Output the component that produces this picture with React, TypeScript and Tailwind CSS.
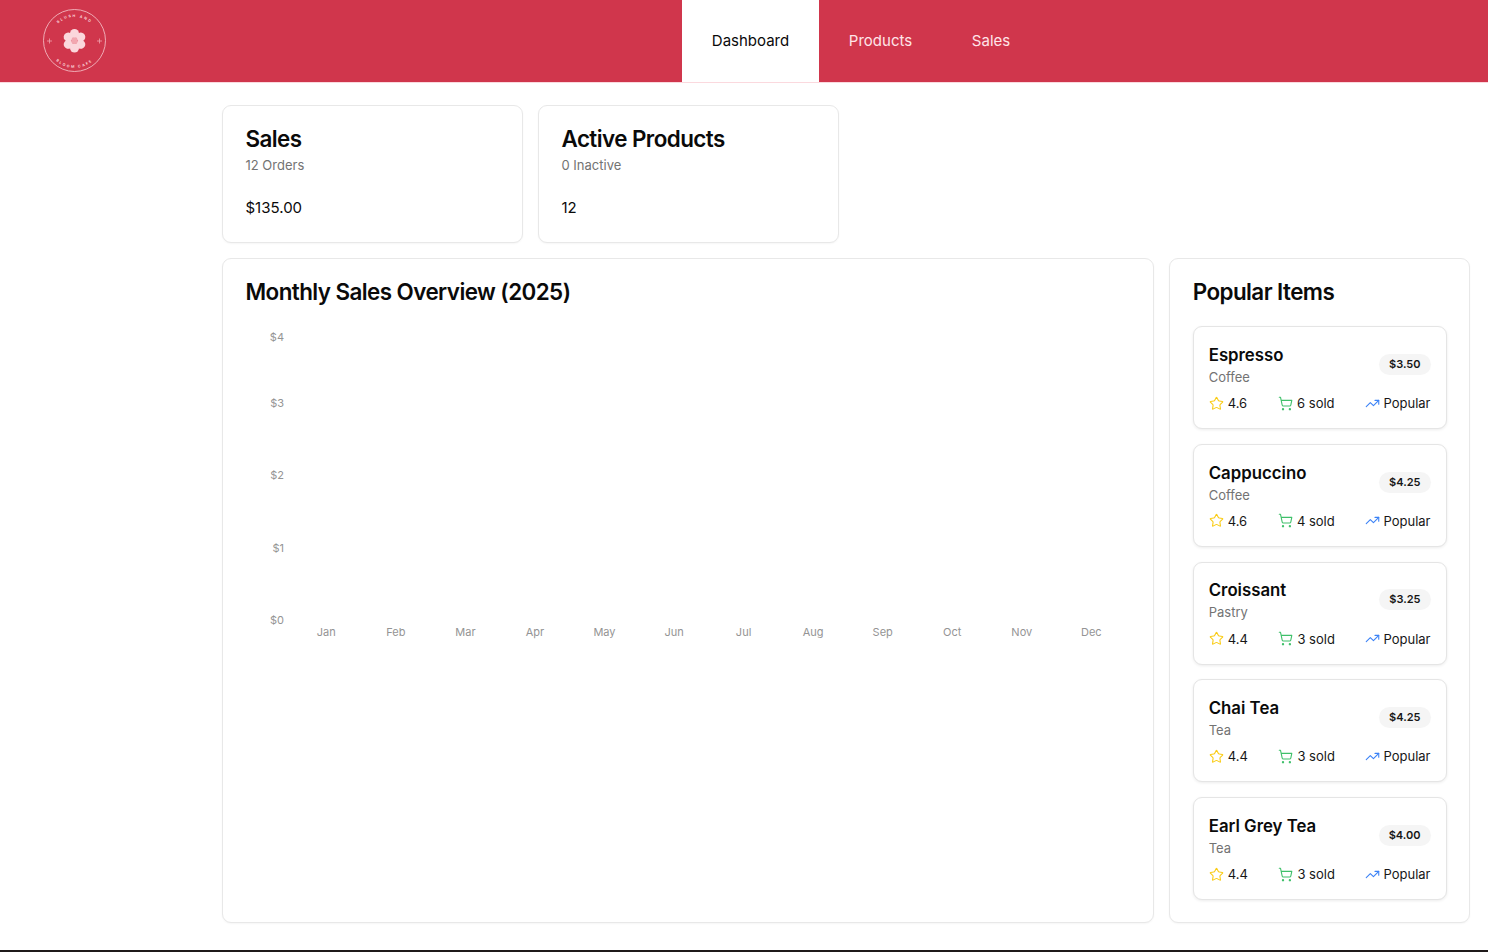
import React from "react";
import { ShoppingCart, Star, TrendingUp } from "lucide-react";

const items = [
  { name: "Espresso", cat: "Coffee", price: "$3.50", rating: "4.6", sold: "6 sold" },
  { name: "Cappuccino", cat: "Coffee", price: "$4.25", rating: "4.6", sold: "4 sold" },
  { name: "Croissant", cat: "Pastry", price: "$3.25", rating: "4.4", sold: "3 sold" },
  { name: "Chai Tea", cat: "Tea", price: "$4.25", rating: "4.4", sold: "3 sold" },
  { name: "Earl Grey Tea", cat: "Tea", price: "$4.00", rating: "4.4", sold: "3 sold" },
];
const months = ["Jan", "Feb", "Mar", "Apr", "May", "Jun", "Jul", "Aug", "Sep", "Oct", "Nov", "Dec"];
const ticks: [string, number][] = [["$4", 341], ["$3", 407], ["$2", 479], ["$1", 552], ["$0", 624]];

function Logo() {
  const petals = [0, 60, 120, 180, 240, 300];
  return (
    <svg width="64" height="64" viewBox="0 0 64 64" className="shrink-0">
      <defs>
        <path id="top-arc" d="M 7.5 32 A 24 24 0 0 1 55.5 32" />
        <path id="bottom-arc" d="M 4.5 32 A 27 27 0 0 0 58.5 32" />
      </defs>
      <circle cx="31.5" cy="31.5" r="31" fill="none" stroke="#f6c9cf" strokeWidth="0.8" />
      <text fontSize="3.6" fill="#fbd5da" letterSpacing="1.7" fontFamily="Inter, sans-serif" fontWeight="700">
        <textPath href="#top-arc" startOffset="50%" textAnchor="middle">BLUSH AND</textPath>
      </text>
      <text fontSize="3.6" fill="#fbd5da" letterSpacing="1.7" fontFamily="Inter, sans-serif" fontWeight="700">
        <textPath href="#bottom-arc" startOffset="50%" textAnchor="middle">BLOOM CAFE</textPath>
      </text>
      {petals.map((a) => (
        <ellipse key={a} cx="31.5" cy="24.5" rx="4.5" ry="4.6" fill="#fbd7dc" transform={`rotate(${a} 31.5 31.7)`} />
      ))}
      <circle cx="31.5" cy="31.7" r="3.2" fill="#f2a7b0" />
      <path d="M6.5 29.5v5M4 32h5M56.5 29.5v5M54 32h5" stroke="#f0a3ad" strokeWidth="0.8" />
    </svg>
  );
}

function StatCard({ title, sub, value }: { title: string; sub: string; value: string }) {
  return (
    <div className="w-[301px] h-[138px] rounded-[9px] border border-[#e8e8e8] bg-white px-[22.5px] pt-[19px] shadow-[0_1px_2px_rgba(0,0,0,0.04)]">
      <h2 className="text-[22.4px] leading-[28px] font-semibold tracking-[-0.56px] text-[#0a0a0a]">{title}</h2>
      <p className="mt-[2px] text-[13px] leading-[20px] text-[#737373]">{sub}</p>
      <p className="mt-[21px] text-[15px] leading-[24px] text-[#0a0a0a]">{value}</p>
    </div>
  );
}

function Chart() {
  return (
    <svg width="880" height="330" viewBox="222 310 880 330" className="block" fontFamily="Inter, sans-serif" fontSize="11" fill="#949494">
      {ticks.map(([label, y]) => (
        <text key={label} x="283" y={y} textAnchor="end">{label}</text>
      ))}
      {months.map((m, i) => (
        <text key={m} x={325.3 + i * 69.55} y="636" textAnchor="middle">{m}</text>
      ))}
    </svg>
  );
}

function ItemCard({ item }: { item: (typeof items)[number] }) {
  return (
    <div className="h-[103px] rounded-[9px] border border-[#e5e5e5] bg-white px-[15px] pt-[15.75px] shadow-[0_1px_3px_rgba(0,0,0,0.08)]">
      <div className="flex items-center justify-between">
        <div>
          <h3 className="text-[16.8px] leading-[25px] font-semibold text-[#0a0a0a]">{item.name}</h3>
          <p className="text-[13px] leading-[19px] text-[#737373]">{item.cat}</p>
        </div>
        <span className="-mt-[1px] rounded-full bg-[#f5f5f5] px-[10px] py-[2px] text-[11px] leading-[17px] font-semibold text-[#171717]">{item.price}</span>
      </div>
      <div className="mt-[6.25px] flex items-center justify-between text-[13px] leading-[20px] text-[#171717]">
        <span className="flex items-center gap-[4px]">
          <Star size={15} strokeWidth={1.75} className="text-[#facc15]" />
          {item.rating}
        </span>
        <span className="flex items-center gap-[4px]">
          <ShoppingCart size={15} strokeWidth={1.75} className="text-[#3fc06a]" />
          {item.sold}
        </span>
        <span className="flex items-center gap-[3px]">
          <TrendingUp size={15} strokeWidth={1.75} className="text-[#3b82f6]" />
          Popular
        </span>
      </div>
    </div>
  );
}

export default function App() {
  return (
    <div className="flex h-[952px] flex-col overflow-hidden bg-white font-['Inter',sans-serif]">
      <header className="flex h-[83px] shrink-0 items-stretch border-b border-[#fbd9de] bg-[#d0364c]">
        <div className="flex w-[682px] items-center pl-[43px] pb-[1px]">
          <Logo />
        </div>
        <nav className="flex text-[15px] text-[#ffe4e8]">
          <a className="flex w-[137px] items-center justify-center bg-white text-[#0a0a0a]">Dashboard</a>
          <a className="flex w-[123px] items-center justify-center">Products</a>
          <a className="flex w-[98px] items-center justify-center">Sales</a>
        </nav>
      </header>
      <main className="flex min-h-0 flex-1 flex-col gap-[15px] pl-[222px] pr-[18px] pt-[22px]">
        <div className="flex gap-[15px]">
          <StatCard title="Sales" sub="12 Orders" value="$135.00" />
          <StatCard title="Active Products" sub="0 Inactive" value="12" />
        </div>
        <div className="flex h-[665px] gap-[15px]">
          <section className="w-[933px] rounded-[9px] border border-[#e8e8e8] bg-white pt-[19px] shadow-[0_1px_2px_rgba(0,0,0,0.04)]">
            <h2 className="pl-[22.5px] text-[22.4px] leading-[28px] font-semibold tracking-[-0.56px] text-[#0a0a0a]">Monthly Sales Overview (2025)</h2>
            <div className="mt-[4px]">
              <Chart />
            </div>
          </section>
          <aside className="w-[301px] rounded-[9px] border border-[#e8e8e8] bg-white px-[22.5px] pt-[19px] shadow-[0_1px_2px_rgba(0,0,0,0.04)]">
            <h2 className="text-[22.4px] leading-[28px] font-semibold tracking-[-0.56px] text-[#0a0a0a]">Popular Items</h2>
            <div className="mt-[20px] flex flex-col gap-[14.75px]">
              {items.map((it) => (
                <ItemCard key={it.name} item={it} />
              ))}
            </div>
          </aside>
        </div>
      </main>
      <footer className="h-[2px] shrink-0 bg-[#1f1a1a]" />
    </div>
  );
}
